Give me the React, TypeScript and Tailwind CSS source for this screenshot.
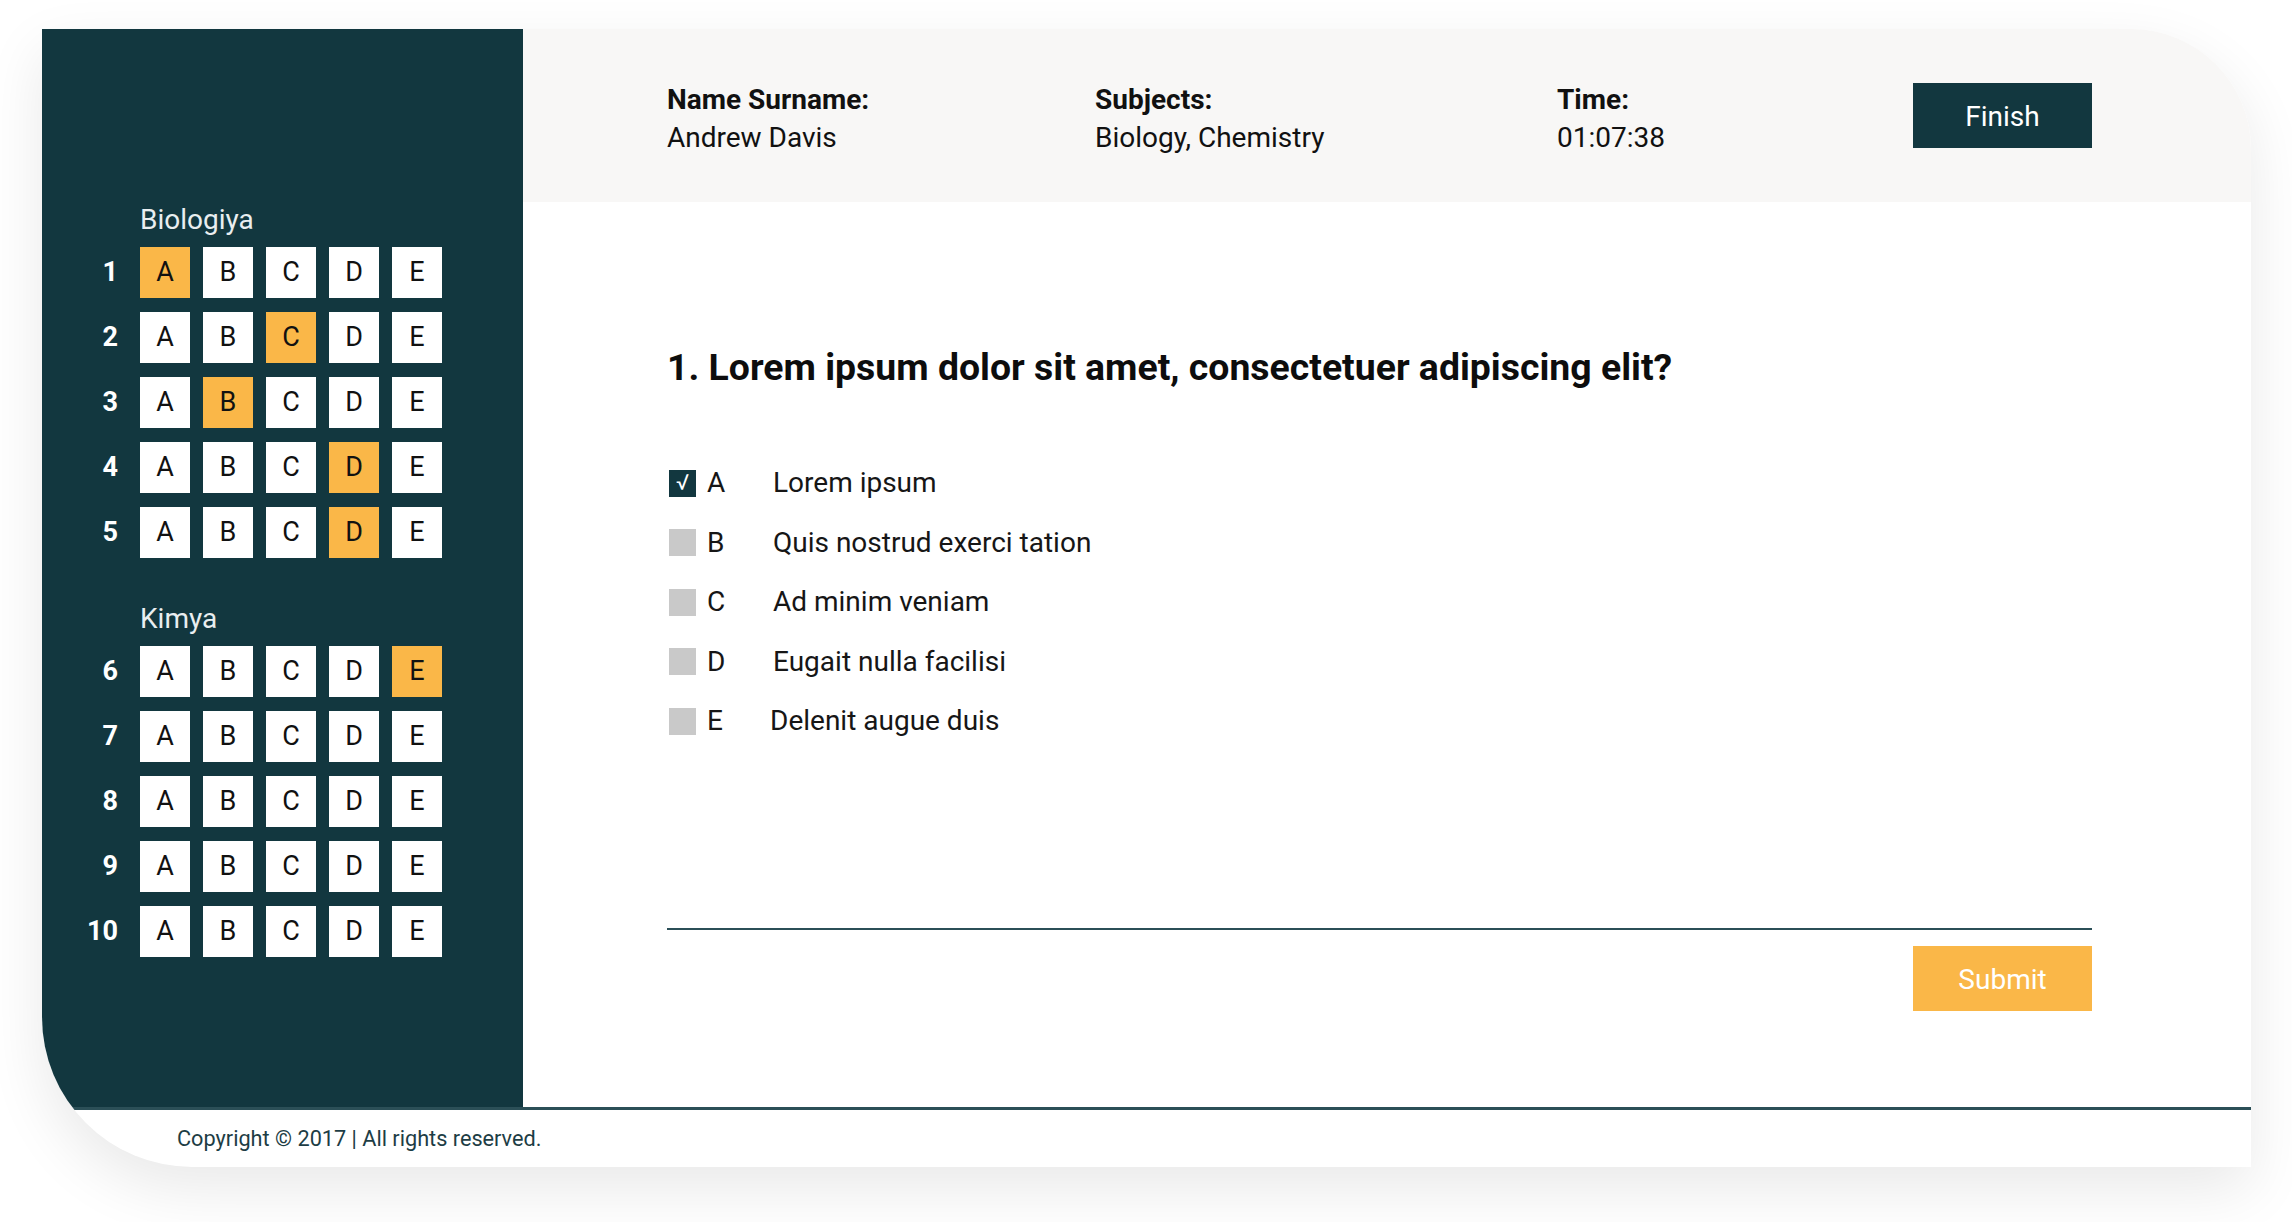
import React from "react";

const DARK = "bg-[#12373f]";

type Row = { n: number; sel: number };

const bio: Row[] = [
  { n: 1, sel: 0 },
  { n: 2, sel: 2 },
  { n: 3, sel: 1 },
  { n: 4, sel: 3 },
  { n: 5, sel: 3 },
];
const kim: Row[] = [
  { n: 6, sel: 4 },
  { n: 7, sel: -1 },
  { n: 8, sel: -1 },
  { n: 9, sel: -1 },
  { n: 10, sel: -1 },
];
const LETTERS = ["A", "B", "C", "D", "E"];

function AnswerRow({ row }: { row: Row }) {
  return (
    <div className="flex items-center h-[51px]">
      <div className="w-[40px] text-right text-white font-bold text-[27px] leading-none">{row.n}</div>
      <div className="ml-[22px] flex gap-[13px]">
        {LETTERS.map((l, i) => (
          <div
            key={l}
            className={
              "w-[50px] h-[51px] flex items-center justify-center text-[27px] text-[#111] " +
              (i === row.sel ? "bg-[#fab748]" : "bg-white")
            }
          >
            {l}
          </div>
        ))}
      </div>
    </div>
  );
}

function Section({ title, rows }: { title: string; rows: Row[] }) {
  return (
    <div>
      <div className="pl-[62px] h-[30px] leading-[30px] text-[28px] text-[#e9eef0]">{title}</div>
      <div className="mt-[12px] flex flex-col gap-[14px]">
        {rows.map((r) => (
          <AnswerRow key={r.n} row={r} />
        ))}
      </div>
    </div>
  );
}

const options = [
  { l: "A", t: "Lorem ipsum", checked: true },
  { l: "B", t: "Quis nostrud exerci tation" },
  { l: "C", t: "Ad minim veniam" },
  { l: "D", t: "Eugait nulla facilisi" },
  { l: "E", t: "Delenit augue duis", shift: true },
];

export default function App() {
  return (
    <div
      className="w-[2292px] h-[1222px] bg-white overflow-hidden"
      style={{ fontFamily: "Roboto, 'Liberation Sans', sans-serif" }}
    >
      <div className="ml-[42px] mt-[29px] w-[2209px] h-[1138px] flex flex-col bg-white rounded-tr-[120px] rounded-bl-[150px] overflow-hidden shadow-[0_22px_60px_rgba(0,0,0,0.09)]">
        {/* top area */}
        <div className="flex h-[1081px] border-b-[3px] border-[#2b4f57]">
          {/* sidebar */}
          <div className={"w-[481px] shrink-0 pt-[176px] pl-[36px] " + DARK}>
            <Section title="Biologiya" rows={bio} />
            <div className="h-[46px]" />
            <Section title="Kimya" rows={kim} />
          </div>
          {/* main */}
          <div className="flex-1 flex flex-col">
            <div className="h-[173px] bg-[#f8f7f6] flex items-center pl-[144px] pr-[159px] text-[28px] text-[#111]">
              <div className="w-[428px] pt-[6px]">
                <div className="font-bold leading-[38px]">Name Surname:</div>
                <div className="leading-[38px]">Andrew Davis</div>
              </div>
              <div className="w-[462px] pt-[6px]">
                <div className="font-bold leading-[38px]">Subjects:</div>
                <div className="leading-[38px]">Biology, Chemistry</div>
              </div>
              <div className="pt-[6px]">
                <div className="font-bold leading-[38px]">Time:</div>
                <div className="leading-[38px]">01:07:38</div>
              </div>
              <div className="ml-auto w-[179px] h-[65px] bg-[#12373f] text-white flex items-center justify-center text-[28px] pt-[2px]">
                Finish
              </div>
            </div>
            <div className="pl-[144px] pr-[159px] pt-[144px] flex flex-col">
              <div className="text-[37.4px] font-bold leading-[42px] text-[#0d0d0d]">
                1. Lorem ipsum dolor sit amet, consectetuer adipiscing elit?
              </div>
              <div className="mt-[75px] flex flex-col gap-[19.5px]">
                {options.map((o) => (
                  <div key={o.l} className="flex items-center h-[40px] text-[28px] text-[#161616]">
                    <div
                      className={
                        "ml-[2px] w-[27px] h-[27px] flex items-center justify-center text-white text-[22px] leading-none " +
                        (o.checked ? "bg-[#12373f]" : "bg-[#c9c9c9]")
                      }
                    >
                      {o.checked ? "√" : ""}
                    </div>
                    <div className="ml-[11px] w-[66px]">{o.l}</div>
                    <div className={o.shift ? "-ml-[3px]" : ""}>{o.t}</div>
                  </div>
                ))}
              </div>
              <div className="mt-[187px] h-[2px] bg-[#2b4f57]" />
              <div className="mt-[16px] flex justify-end">
                <div className="w-[179px] h-[65px] bg-[#fab748] text-white flex items-center justify-center text-[28px] pt-[2px]">
                  Submit
                </div>
              </div>
            </div>
          </div>
        </div>
        {/* footer */}
        <div className="flex-1 flex items-center pl-[135px] pt-[2px] text-[21.7px] text-[#1d3d45]">
          Copyright © 2017 | All rights reserved.
        </div>
      </div>
    </div>
  );
}
